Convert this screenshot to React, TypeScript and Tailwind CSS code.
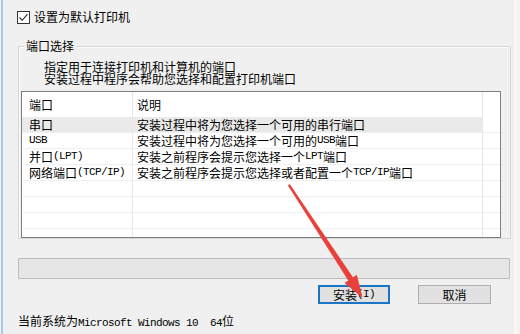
import React from "react"

const CJK = '"Noto Sans CJK SC", "Liberation Sans", sans-serif'

// ascii runs render in a narrow mono face like NSimSun
function Mixed({ text }: { text: string }) {
  const parts = text.split(/([\x20-\x7e]+)/)
  return (
    <>
      {parts.map((p, i) =>
        i % 2 === 1 ? (
          <span key={i} className="font-['Liberation_Mono',monospace] text-[11px] tracking-[-0.6px] whitespace-pre">
            {p}
          </span>
        ) : (
          <span key={i}>{p}</span>
        )
      )}
    </>
  )
}

const rows = [
  { port: "串口", desc: "安装过程中将为您选择一个可用的串行端口", selected: true },
  { port: "USB", desc: "安装过程中将为您选择一个可用的USB端口" },
  { port: "并口(LPT)", desc: "安装之前程序会提示您选择一个LPT端口" },
  { port: "网络端口(TCP/IP)", desc: "安装之前程序会提示您选择或者配置一个TCP/IP端口" },
  { port: "", desc: "" },
  { port: "", desc: "" },
  { port: "", desc: "" },
  { port: "", desc: "" },
  { port: "", desc: "" },
]

export default function App() {
  return (
    <div
      className="relative w-[520px] h-[334px] overflow-hidden bg-[#f0f0f0] flex text-[12px] text-black"
      style={{ fontFamily: CJK }}
    >
      {/* window edge */}
      <div className="w-[1px] bg-[#eef3f8]" />
      <div className="w-[2px] bg-[#a9c8ea]" />

      <div className="flex-1 flex flex-col pl-[14px]">
        {/* default printer checkbox */}
        <div className="mt-[10px] h-[14px] flex items-center gap-[4px]">
          <div className="w-[13px] h-[13px] border border-[#333] bg-white flex items-center justify-center">
            <svg width="11" height="11" viewBox="0 0 11 11">
              <path d="M1.5 5.5 L4.2 8.3 L9.5 2.2" fill="none" stroke="#222" strokeWidth="1.1" />
            </svg>
          </div>
          <span className="leading-[14px]">设置为默认打印机</span>
        </div>

        {/* group box */}
        <div className="relative mt-[22px] ml-[1px] w-[493px] h-[193px] border border-[#d6d6d6] shadow-[inset_1px_1px_0_#fbfbfb]">
          <span className="absolute left-[5px] top-[-9px] px-[2px] bg-[#f0f0f0] leading-[16px]">端口选择</span>

          <div className="pl-[25px] pt-[14px] leading-[12px]">
            <div>指定用于连接打印机和计算机的端口</div>
            <div>安装过程中程序会帮助您选择和配置打印机端口</div>
          </div>

          {/* list view */}
          <div className="mt-[6px] ml-[2px] w-[480px] h-[147px] border border-[#7f7f7f] bg-white overflow-hidden">
            <div className="flex h-[25px]">
              <div className="w-[111px] border-r border-[#e5e5e5] pl-[7px] flex items-center">端口</div>
              <div className="w-[350px] border-r border-[#e5e5e5] pl-[4px] flex items-center">说明</div>
              <div className="flex-1" />
            </div>
            {rows.map((r, i) => (
              <div key={i} className="flex h-[16px] border-b border-[#f0f0f0]">
                <div
                  className={`w-[111px] border-r border-[#e8e8e8] pl-[7px] flex items-center leading-[15px] whitespace-nowrap ${
                    r.selected ? "bg-[#eaeaea]" : ""
                  }`}
                >
                  <Mixed text={r.port} />
                </div>
                <div
                  className={`w-[350px] border-r border-[#e8e8e8] pl-[4px] flex items-center leading-[15px] whitespace-nowrap ${
                    r.selected ? "bg-[#eaeaea]" : ""
                  }`}
                >
                  <Mixed text={r.desc} />
                </div>
                <div className="flex-1" />
              </div>
            ))}
          </div>
        </div>

        {/* progress bar */}
        <div className="mt-[19px] ml-[1px] w-[492px] h-[21px] border border-[#bcbcbc] bg-[#e6e6e6]" />

        {/* buttons */}
        <div className="mt-[6px] flex">
          <button className="ml-[301px] w-[72px] h-[19px] border-2 border-[#1a75c4] bg-[#e1e1e1] flex items-center justify-center leading-none">
            <Mixed text="安装(I)" />
          </button>
          <button className="ml-[28px] w-[73px] h-[19px] border border-[#adadad] bg-[#e1e1e1] flex items-center justify-center leading-none">
            取消
          </button>
        </div>

        {/* status */}
        <div className="mt-[10px] ml-[1px] leading-[14px]">
          <Mixed text="当前系统为Microsoft Windows 10  64位" />
        </div>
      </div>

      <div className="w-[3px] bg-[#f8f8f8]" />
      <div className="w-[3px] bg-[#fbf1ec]" />

      {/* red annotation arrow */}
      <svg className="absolute left-0 top-0 pointer-events-none" width="520" height="334" viewBox="0 0 520 334">
        <polygon
          points="288.3,185.4 348.7,280.6 345,283.1 362,297 356.6,275.3 352.9,277.8 289.7,184.6"
          fill="#e8403a"
          stroke="#e8403a"
          strokeWidth="0.8"
          strokeLinejoin="round"
        />
      </svg>
    </div>
  )
}
